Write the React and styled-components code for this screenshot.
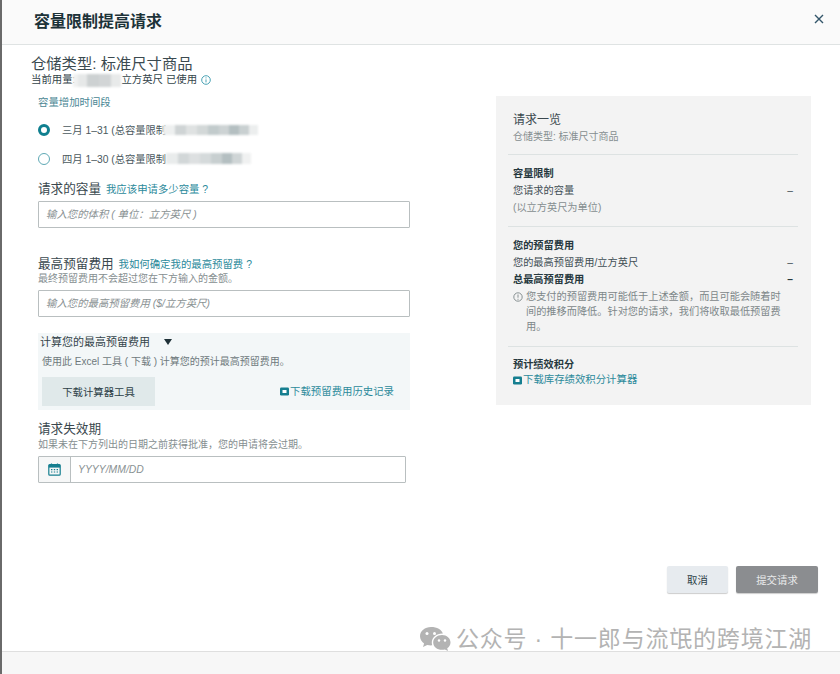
import React from 'react';
import styled, { createGlobalStyle } from 'styled-components';

const GlobalStyle = createGlobalStyle`
  html, body { margin: 0; padding: 0; background: #fff; }
  body { font-family: "Liberation Sans", "Noto Sans CJK SC", sans-serif; color: #2c3e46; }
  * { box-sizing: border-box; }
`;

const Page = styled.div`
  position: relative;
  width: 840px;
  height: 674px;
  overflow: hidden;
  display: flex;
  flex-direction: column;
  border-left: 2px solid #6a6a6a;
  background: #fff;
`;

const Header = styled.header`
  flex: none;
  height: 45px;
  display: flex;
  align-items: center;
  justify-content: space-between;
  padding: 0 15px 1px 32px;
  background: #fafafa;
  border-bottom: 1px solid #dfe3e3;
`;

const Title = styled.h1`
  margin: 0;
  font-size: 16px;
  line-height: 20px;
  font-weight: 700;
  color: #1d3339;
`;

const CloseButton = styled.button`
  width: 12px;
  height: 12px;
  padding: 0;
  border: 0;
  background: none;
  display: flex;
  margin-top: -5px;
`;

const Body = styled.main`
  flex: 1;
  display: flex;
  flex-direction: column;
`;

const Content = styled.div`
  display: flex;
  align-items: flex-start;
  padding-left: 29px;
`;

const LeftCol = styled.section`
  flex: none;
  width: 380px;
  padding-top: 10px;
`;

const StorageType = styled.div`
  font-size: 15.3px;
  line-height: 18px;
  color: #3b4a50;
`;

const Usage = styled.div`
  display: flex;
  align-items: center;
  font-size: 10.4px;
  line-height: 14px;
  color: #33444a;
`;

const InfoIcon = styled.svg`
  width: 10px;
  height: 10px;
  margin-left: 4px;
  flex: none;
`;

const Fields = styled.div`
  padding-left: 7px;
  display: flex;
  flex-direction: column;
`;

const PeriodLabel = styled.div`
  margin-top: 9px;
  font-size: 10.4px;
  line-height: 14px;
  color: #4b8794;
`;

const RadioRow = styled.label`
  height: 29px;
  display: flex;
  align-items: center;
  font-size: 10.3px;
  color: #4b595e;
  &:first-of-type { margin-top: 5px; }
`;

const RadioDot = styled.span`
  flex: none;
  width: 12px;
  height: 12px;
  margin-right: 12px;
  border-radius: 50%;
  background: #fff;
  border: ${(p) => (p.$on ? '3.5px solid #0f7f8f' : '1px solid #5fa9b5')};
`;

const Mosaic = styled.span`
  display: inline-flex;
  flex: none;
  height: ${(p) => p.$h || 10}px;
  margin-left: ${(p) => p.$shift || 0}px;
  filter: blur(1px);
`;

const MosaicCell = styled.span`
  width: ${(p) => p.$w}px;
  background: ${(p) => p.$c};
`;

const FieldHead = styled.div`
  display: flex;
  align-items: baseline;
  gap: 5px;
  line-height: 14px;
  margin-top: ${(p) => p.$top}px;
`;

const FieldTitle = styled.span`
  font-size: 12.6px;
  color: #3a484e;
`;

const HelpLink = styled.a`
  font-size: 10.4px;
  color: #2b8a9b;
`;

const HelpText = styled.div`
  font-size: 10px;
  line-height: 14px;
  margin-top: ${(p) => p.$top || 0}px;
  color: #858e90;
`;

const TextInput = styled.input`
  display: block;
  width: 372px;
  height: 27px;
  margin-top: ${(p) => p.$top}px;
  padding: 0 7px;
  border: 1px solid #b9bfc0;
  border-radius: 1px;
  font-family: inherit;
  font-size: 10.4px;
  background: #fff;
  &::placeholder { font-style: italic; color: #8a9294; opacity: 1; }
`;

const CalcBox = styled.div`
  width: 372px;
  height: 77px;
  margin-top: 16px;
  padding: 2px 16px 0 4px;
  background: #f3f7f8;
`;

const CalcHead = styled.div`
  display: flex;
  align-items: center;
  padding-left: 2px;
  margin-left: -4px;
  font-size: 11px;
  line-height: 14px;
  color: #33444a;
`;

const Caret = styled.span`
  width: 0;
  height: 0;
  margin-left: 14px;
  border-left: 4px solid transparent;
  border-right: 4px solid transparent;
  border-top: 6px solid #1f3138;
`;

const CalcText = styled.div`
  margin-top: 6px;
  font-size: 10px;
  line-height: 14px;
  color: #6e797c;
`;

const CalcActions = styled.div`
  display: flex;
  align-items: center;
  justify-content: space-between;
  margin-top: 8px;
`;

const ToolButton = styled.button`
  width: 113px;
  height: 29px;
  border: 0;
  background: #e0e9ea;
  font-family: inherit;
  font-size: 10.4px;
  color: #2c3e46;
`;

const DownloadLink = styled.a`
  display: flex;
  align-items: center;
  font-size: 10.4px;
  line-height: 14px;
  color: #2b8a9b;
`;

const DownloadIcon = styled.svg`
  width: 9px;
  height: 9px;
  margin-right: 1px;
  flex: none;
`;

const DateField = styled.div`
  display: flex;
  width: 368px;
  height: 27px;
  margin-top: 4px;
  border: 1px solid #b9bfc0;
  border-radius: 1px;
`;

const DateAddon = styled.div`
  flex: none;
  width: 32px;
  display: flex;
  align-items: center;
  justify-content: center;
  background: #f6f7f7;
  border-right: 1px solid #b9bfc0;
`;

const DateInput = styled.input`
  flex: 1;
  min-width: 0;
  border: 0;
  padding: 0 7px;
  background: #fff;
  font-family: inherit;
  font-size: 10.4px;
  &::placeholder { font-style: italic; color: #8a9294; opacity: 1; }
`;

const Panel = styled.aside`
  flex: none;
  width: 315px;
  height: 309px;
  margin: 51px 0 0 85px;
  padding: 17px 13px 0 12px;
  background: #f3f3f3;
`;

const PanelHead = styled.div`
  padding: 0 5px 11px;
  border-bottom: 1px solid #dde2e2;
`;

const PanelTitle = styled.div`
  font-size: 12px;
  line-height: 14px;
  color: #3a484e;
`;

const PanelSub = styled.div`
  margin-top: 3px;
  font-size: 10px;
  line-height: 13px;
  color: #858e90;
`;

const PanelSection = styled.div`
  padding: ${(p) => p.$top}px 5px ${(p) => p.$bottom}px;
  border-bottom: ${(p) => (p.$last ? '0' : '1px solid #dde2e2')};
`;

const Line = styled.div`
  display: flex;
  justify-content: space-between;
  font-size: 10.2px;
  line-height: 17px;
  font-weight: ${(p) => (p.$bold ? 700 : 400)};
  color: ${(p) => (p.$muted ? '#858e90' : p.$bold ? '#26383e' : '#3f4e54')};
`;

const Note = styled.div`
  display: flex;
  gap: 3px;
  margin-top: 1px;
  padding-right: 8px;
  font-size: 10.2px;
  line-height: 15px;
  color: #7d8789;
`;

const NoteIcon = styled.svg`
  width: 10px;
  height: 10px;
  margin-top: 3px;
  flex: none;
`;

const Actions = styled.div`
  flex: 1;
  display: flex;
  justify-content: flex-end;
  align-items: flex-end;
  gap: 8px;
  padding: 0 22px 58px 0;
`;

const ActionButton = styled.button`
  width: ${(p) => p.$w}px;
  height: 27px;
  border: 0;
  border-radius: 2px;
  font-family: inherit;
  font-size: 10.4px;
  box-shadow: 0 1px 1px rgba(0, 0, 0, 0.2);
  background: ${(p) => (p.$primary ? '#8b8d90' : '#e7ebef')};
  color: ${(p) => (p.$primary ? '#e9eaeb' : '#2c3e46')};
`;

const Footer = styled.footer`
  flex: none;
  height: 23px;
  background: #f7f7f7;
  border-top: 1px solid #dfdfdf;
`;

const Watermark = styled.div`
  position: absolute;
  left: 417px;
  top: 625px;
  display: flex;
  align-items: center;
  gap: 5px;
  font-size: 23px;
  line-height: 28px;
  letter-spacing: 0.8px;
  color: #b3b3b3;
  white-space: nowrap;
`;

const blurA = [[12, '#eef0f0'], [11, '#cfd4d5'], [11, '#dfe2e2'], [11, '#d3d8d8'], [11, '#c2cbcc'], [10, '#cdd3d4'], [10, '#b4bfc1'], [10, '#c9d0d1'], [9, '#eceeee']];
const blurB = [[12, '#e9ecec'], [11, '#d2d7d8'], [11, '#dde0e1'], [11, '#d5dadb'], [11, '#c8cfd0'], [10, '#b4bfc1'], [10, '#cfd5d6'], [9, '#f0f1f1']];
const blurC = [[5, '#f0f1f1'], [9, '#e6e8e8'], [12, '#cdd1d2'], [12, '#d2d5d6'], [10, '#e8eaea']];

const Blur = ({ cells, h, shift }) => (
  <Mosaic $h={h} $shift={shift}>
    {cells.map(([w, c], i) => (
      <MosaicCell key={i} $w={w} $c={c} />
    ))}
  </Mosaic>
);

const Info = () => (
  <InfoIcon viewBox="0 0 10 10">
    <circle cx="5" cy="5" r="4.3" fill="none" stroke="#4aa3b5" strokeWidth="1" />
    <path d="M5 4.4v3M5 2.4v1" stroke="#4aa3b5" strokeWidth="1" />
  </InfoIcon>
);

const Download = () => (
  <DownloadIcon viewBox="0 0 9 9">
    <rect x="0" y="0.5" width="9" height="8" rx="1.2" fill="#167f90" />
    <rect x="2.5" y="3" width="4" height="3" fill="#fff" />
  </DownloadIcon>
);

const App = () => (
  <Page>
    <GlobalStyle />
    <Header>
      <Title>容量限制提高请求</Title>
      <CloseButton aria-label="关闭">
        <svg width="12" height="12" viewBox="0 0 12 12">
          <path d="M2 2l8 8M10 2l-8 8" stroke="#33566a" strokeWidth="1.4" />
        </svg>
      </CloseButton>
    </Header>
    <Body>
      <Content>
        <LeftCol>
          <StorageType>仓储类型: 标准尺寸商品</StorageType>
          <Usage>
            当前用量:
            <Blur cells={blurC} h={13} shift={-2} />
            立方英尺 已使用
            <Info />
          </Usage>
          <Fields>
            <PeriodLabel>容量增加时间段</PeriodLabel>
            <RadioRow>
              <RadioDot $on />
              三月 1–31 (总容量限制
              <Blur cells={blurA} shift={-3} />
            </RadioRow>
            <RadioRow>
              <RadioDot />
              四月 1–30 (总容量限制
              <Blur cells={blurB} h={11} />
            </RadioRow>
            <FieldHead $top={9}>
              <FieldTitle>请求的容量</FieldTitle>
              <HelpLink>我应该申请多少容量 ?</HelpLink>
            </FieldHead>
            <TextInput $top={4} placeholder="输入您的体积 ( 单位：立方英尺 )" />
            <FieldHead $top={29}>
              <FieldTitle>最高预留费用</FieldTitle>
              <HelpLink>我如何确定我的最高预留费 ?</HelpLink>
            </FieldHead>
            <HelpText>最终预留费用不会超过您在下方输入的金额。</HelpText>
            <TextInput $top={4} placeholder="输入您的最高预留费用 ($/立方英尺)" />
            <CalcBox>
              <CalcHead>
                计算您的最高预留费用
                <Caret />
              </CalcHead>
              <CalcText>使用此 Excel 工具 ( 下载 ) 计算您的预计最高预留费用。</CalcText>
              <CalcActions>
                <ToolButton>下载计算器工具</ToolButton>
                <DownloadLink>
                  <Download />
                  下载预留费用历史记录
                </DownloadLink>
              </CalcActions>
            </CalcBox>
            <FieldHead $top={12}>
              <FieldTitle>请求失效期</FieldTitle>
            </FieldHead>
            <HelpText $top={2}>如果未在下方列出的日期之前获得批准，您的申请将会过期。</HelpText>
            <DateField>
              <DateAddon>
                <svg width="13" height="13" viewBox="0 0 13 13">
                  <path d="M3.5 0.5v2M9.5 0.5v2" stroke="#167f90" strokeWidth="1.2" />
                  <rect x="0.8" y="1.6" width="11.4" height="10.6" rx="1" fill="none" stroke="#167f90" strokeWidth="1.2" />
                  <rect x="0.8" y="1.6" width="11.4" height="3" fill="#167f90" />
                  <path d="M3 6.6h1.4M5.8 6.6h1.4M8.6 6.6h1.4M3 9h1.4M5.8 9h1.4M8.6 9h1.4" stroke="#167f90" strokeWidth="1.1" />
                </svg>
              </DateAddon>
              <DateInput placeholder="YYYY/MM/DD" />
            </DateField>
          </Fields>
        </LeftCol>
        <Panel>
          <PanelHead>
            <PanelTitle>请求一览</PanelTitle>
            <PanelSub>仓储类型: 标准尺寸商品</PanelSub>
          </PanelHead>
          <PanelSection $top={10} $bottom={10}>
            <Line $bold>容量限制</Line>
            <Line>
              <span>您请求的容量</span>
              <span>–</span>
            </Line>
            <Line $muted>(以立方英尺为单位)</Line>
          </PanelSection>
          <PanelSection $top={10} $bottom={12}>
            <Line $bold>您的预留费用</Line>
            <Line>
              <span>您的最高预留费用/立方英尺</span>
              <span>–</span>
            </Line>
            <Line $bold>
              <span>总最高预留费用</span>
              <span>–</span>
            </Line>
            <Note>
              <NoteIcon viewBox="0 0 10 10">
                <circle cx="5" cy="5" r="4.2" fill="none" stroke="#7d8789" strokeWidth="0.9" />
                <path d="M5 2.5v3.2M5 6.8v1" stroke="#7d8789" strokeWidth="0.9" />
              </NoteIcon>
              <span>您支付的预留费用可能低于上述金额，而且可能会随着时间的推移而降低。针对您的请求，我们将收取最低预留费用。</span>
            </Note>
          </PanelSection>
          <PanelSection $top={9} $bottom={0} $last>
            <Line $bold>预计绩效积分</Line>
            <Line>
              <DownloadLink>
                <Download />
                下载库存绩效积分计算器
              </DownloadLink>
            </Line>
          </PanelSection>
        </Panel>
      </Content>
      <Actions>
        <ActionButton $w={61}>取消</ActionButton>
        <ActionButton $w={82} $primary>提交请求</ActionButton>
      </Actions>
    </Body>
    <Footer />
    <Watermark>
      <svg width="32" height="27" viewBox="0 0 32 27">
        <path d="M12 1C5.9 1 1 5.1 1 10.2c0 2.9 1.6 5.5 4.1 7.2L4 21l4.2-2.1c1.2.3 2.5.5 3.8.5.4 0 .8 0 1.2-.1-.3-.9-.4-1.8-.4-2.7 0-5 4.6-9 10.4-9h.7C22.800 3.700 17.900 1 12 1z" fill="#b3b3b3" />
        <path d="M23 9c-4.900 0-8.800 3.300-8.800 7.400s3.900 7.400 8.800 7.400c1 0 2-.1 2.900-.4l3.100 1.700-.8-2.800c2-1.400 3.300-3.500 3.300-5.900C31.500 12.300 27.800 9 23 9z" fill="#b3b3b3" />
        <circle cx="8" cy="7.500" r="1.500" fill="#fff" />
        <circle cx="15.500" cy="7.500" r="1.500" fill="#fff" />
        <circle cx="20" cy="14.500" r="1.200" fill="#fff" />
        <circle cx="26" cy="14.500" r="1.200" fill="#fff" />
      </svg>
      公众号 · 十一郎与流氓的跨境江湖
    </Watermark>
  </Page>
);

export default App;
